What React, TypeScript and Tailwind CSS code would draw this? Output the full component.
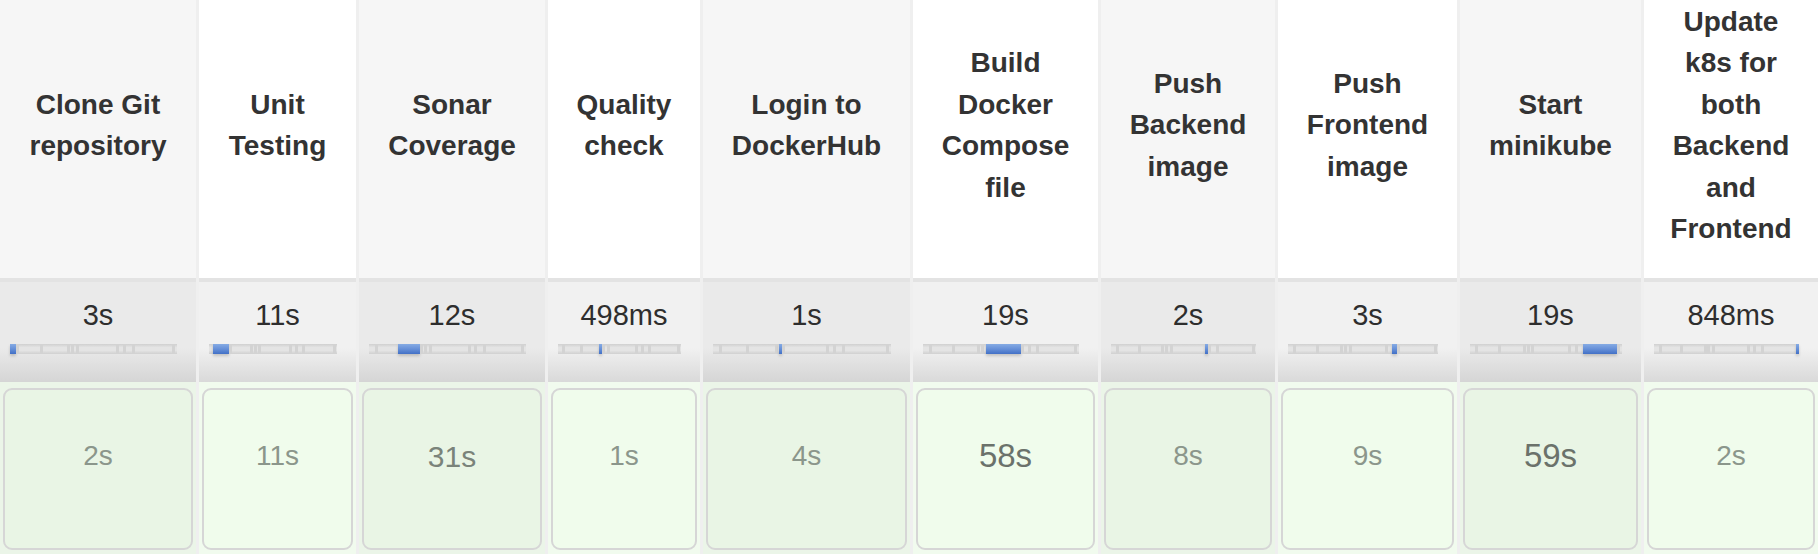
type Stage = {
  name: string[];
  avg: string;
  ms: number;
  run: string;
  size: "sm" | "md" | "lg";
  width: string;
};

const stages: Stage[] = [
  { name: ["Clone Git", "repository"], avg: "3s", ms: 3000, run: "2s", size: "sm", width: "w-[196px]" },
  { name: ["Unit", "Testing"], avg: "11s", ms: 11000, run: "11s", size: "sm", width: "w-[157px]" },
  { name: ["Sonar", "Coverage"], avg: "12s", ms: 12000, run: "31s", size: "md", width: "w-[186px]" },
  { name: ["Quality", "check"], avg: "498ms", ms: 498, run: "1s", size: "sm", width: "w-[152px]" },
  { name: ["Login to", "DockerHub"], avg: "1s", ms: 1000, run: "4s", size: "sm", width: "w-[207px]" },
  { name: ["Build", "Docker", "Compose", "file"], avg: "19s", ms: 19000, run: "58s", size: "lg", width: "w-[185px]" },
  { name: ["Push", "Backend", "image"], avg: "2s", ms: 2000, run: "8s", size: "sm", width: "w-[174px]" },
  { name: ["Push", "Frontend", "image"], avg: "3s", ms: 3000, run: "9s", size: "sm", width: "w-[179px]" },
  { name: ["Start", "minikube"], avg: "19s", ms: 19000, run: "59s", size: "lg", width: "w-[181px]" },
  {
    name: ["Update", "k8s for", "both", "Backend", "and", "Frontend"],
    avg: "848ms",
    ms: 848,
    run: "2s",
    size: "sm",
    width: "flex-1",
  },
];

const runText = {
  sm: "text-[28px] text-[#8b968b]",
  md: "text-[30px] text-[#7a837a]",
  lg: "text-[33px] text-[#6b726b]",
};

// mini timeline: one segment per stage, the current one in blue
const TimeBar = ({ active }: { active: number }) => {
  return (
    <div className="ml-[10px] mr-[19px] flex h-[10px] bg-[linear-gradient(to_bottom,#d0d0d0_0%,#e4e4e4_35%,#e4e4e4_65%,#d0d0d0_100%)]">
      {stages.map((s, i) => (
        <div
          key={i}
          style={{ flexGrow: s.ms, flexBasis: 0 }}
          className={
            i === active
              ? "min-w-[3px] bg-[linear-gradient(to_bottom,#86abe4_0%,#6690d8_50%,#4270c6_100%)] shadow-[0_2px_3px_rgba(0,0,0,0.18)]"
              : "min-w-[1px] border-l-[3px] border-[#d3d3d3] first:border-l-0"
          }
        />
      ))}
    </div>
  );
};

const App = () => {
  return (
    <div className="flex h-[554px] w-[1818px] gap-[3px] overflow-hidden bg-[#efefef] font-['Liberation_Sans',Arial,sans-serif]">
      {stages.map((s, i) => {
        const odd = i % 2 === 1;
        return (
          <div key={i} className={`${s.width} flex shrink-0 flex-col`}>
            <div
              className={`flex h-[278px] flex-col items-center justify-center pb-[28px] text-center text-[28px] font-bold leading-[41.5px] text-[#333] ${
                odd ? "bg-white" : "bg-[#f6f6f6]"
              }`}
            >
              {s.name.map((line) => (
                <div key={line} className="whitespace-nowrap">
                  {line}
                </div>
              ))}
            </div>
            <div
              className={`flex h-[104px] flex-col border-t-4 border-[#e3e3e3] ${
                odd
                  ? "bg-[linear-gradient(to_bottom,#f1f1f1_0%,#f1f1f1_66%,#d9d9d9_100%)]"
                  : "bg-[linear-gradient(to_bottom,#eaeaea_0%,#eaeaea_66%,#d5d5d5_100%)]"
              }`}
            >
              <div className="pt-[15px] text-center text-[29px] leading-[36px] text-[#2e2e2e]">
                {s.avg}
              </div>
              <div className="mt-[11px]">
                <TimeBar active={i} />
              </div>
            </div>
            <div className={`flex-1 px-[3px] pt-[6px] pb-[4px] ${odd ? "bg-[#f1fbee]" : "bg-[#ebf5e8]"}`}>
              <div
                className={`flex h-full items-center justify-center rounded-[9px] border-2 border-[#d6d6d6] pb-[26px] ${
                  odd ? "bg-[#f0fcec]" : "bg-[#e9f5e5]"
                }`}
              >
                <span className={runText[s.size]}>{s.run}</span>
              </div>
            </div>
          </div>
        );
      })}
    </div>
  );
};

export default App;
